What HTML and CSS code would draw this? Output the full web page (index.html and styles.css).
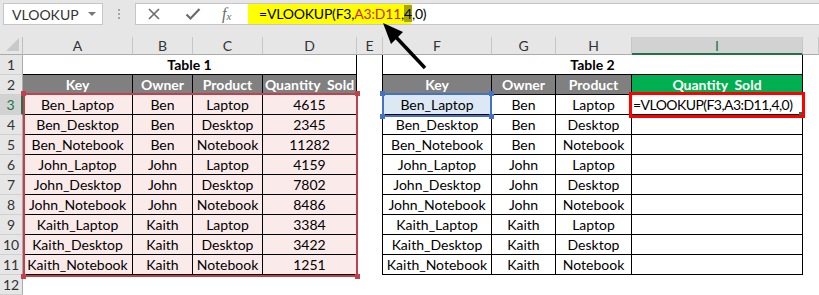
FILE: index.html
```html
<!doctype html>
<html>
    <head>
        <title>VLOOKUP</title>
        <meta charset="utf-8">
        <link rel="stylesheet" href="styles.css">
    </head>

    <body>
        <section class="app">
            <div class="formula-bar">
                <div class="name-box"><span>VLOOKUP</span><span class="caret"></span></div>
                <div class="dots"><i></i><i></i><i></i></div>
                <div class="formula-box">
                    <div class="tools">
                        <svg class="tool" width="14" height="14" viewBox="0 0 14 14"><path d="M2 2 L12 12 M12 2 L2 12" stroke="#6b6b6b" stroke-width="1.6" fill="none"/></svg>
                        <svg class="tool" width="16" height="14" viewBox="0 0 16 14"><path d="M1.5 7.5 L5.5 11.5 L14.5 2" stroke="#6b6b6b" stroke-width="2.2" fill="none"/></svg>
                        <span class="fx">f<sub>x</sub></span>
                    </div>
                    <div class="formula">=VLOOKUP(F3,<span class="ref">A3:D11</span>,<span class="arg">4</span>,0)</div>
                </div>
            </div>

            <div class="sheet">
                <div class="corner"></div>
                <div class="ch">A</div>
                <div class="ch">B</div>
                <div class="ch">C</div>
                <div class="ch">D</div>
                <div class="ch">E</div>
                <div class="ch">F</div>
                <div class="ch">G</div>
                <div class="ch">H</div>
                <div class="ch sel">I</div>
                <div class="ch"></div>

                <div class="rh">1</div>
                <div class="cell t title span4">Table 1</div>
                <div class="cell gap"></div>
                <div class="cell t title span4">Table 2</div>
                <div class="cell"></div>

                <div class="rh">2</div>
                <div class="cell t hd">Key</div>
                <div class="cell t hd">Owner</div>
                <div class="cell t hd">Product</div>
                <div class="cell t hd">Quantity&nbsp; Sold</div>
                <div class="cell gap"></div>
                <div class="cell t hd">Key</div>
                <div class="cell t hd">Owner</div>
                <div class="cell t hd">Product</div>
                <div class="cell t hd green">Quantity&nbsp; Sold</div>
                <div class="cell"></div>

                <div class="rh sel">3</div>
                <div class="cell t pink">Ben_Laptop</div>
                <div class="cell t pink">Ben</div>
                <div class="cell t pink">Laptop</div>
                <div class="cell t pink">4615</div>
                <div class="cell gap"></div>
                <div class="cell t active">Ben_Laptop</div>
                <div class="cell t">Ben</div>
                <div class="cell t">Laptop</div>
                <div class="cell t left">=VLOOKUP(F3,A3:D11,4,0)</div>
                <div class="cell"></div>

                <div class="rh">4</div>
                <div class="cell t pink">Ben_Desktop</div>
                <div class="cell t pink">Ben</div>
                <div class="cell t pink">Desktop</div>
                <div class="cell t pink">2345</div>
                <div class="cell gap"></div>
                <div class="cell t">Ben_Desktop</div>
                <div class="cell t">Ben</div>
                <div class="cell t">Desktop</div>
                <div class="cell t"></div>
                <div class="cell"></div>

                <div class="rh">5</div>
                <div class="cell t pink">Ben_Notebook</div>
                <div class="cell t pink">Ben</div>
                <div class="cell t pink">Notebook</div>
                <div class="cell t pink">11282</div>
                <div class="cell gap"></div>
                <div class="cell t">Ben_Notebook</div>
                <div class="cell t">Ben</div>
                <div class="cell t">Notebook</div>
                <div class="cell t"></div>
                <div class="cell"></div>

                <div class="rh">6</div>
                <div class="cell t pink">John_Laptop</div>
                <div class="cell t pink">John</div>
                <div class="cell t pink">Laptop</div>
                <div class="cell t pink">4159</div>
                <div class="cell gap"></div>
                <div class="cell t">John_Laptop</div>
                <div class="cell t">John</div>
                <div class="cell t">Laptop</div>
                <div class="cell t"></div>
                <div class="cell"></div>

                <div class="rh">7</div>
                <div class="cell t pink">John_Desktop</div>
                <div class="cell t pink">John</div>
                <div class="cell t pink">Desktop</div>
                <div class="cell t pink">7802</div>
                <div class="cell gap"></div>
                <div class="cell t">John_Desktop</div>
                <div class="cell t">John</div>
                <div class="cell t">Desktop</div>
                <div class="cell t"></div>
                <div class="cell"></div>

                <div class="rh">8</div>
                <div class="cell t pink">John_Notebook</div>
                <div class="cell t pink">John</div>
                <div class="cell t pink">Notebook</div>
                <div class="cell t pink">8486</div>
                <div class="cell gap"></div>
                <div class="cell t">John_Notebook</div>
                <div class="cell t">John</div>
                <div class="cell t">Notebook</div>
                <div class="cell t"></div>
                <div class="cell"></div>

                <div class="rh">9</div>
                <div class="cell t pink">Kaith_Laptop</div>
                <div class="cell t pink">Kaith</div>
                <div class="cell t pink">Laptop</div>
                <div class="cell t pink">3384</div>
                <div class="cell gap"></div>
                <div class="cell t">Kaith_Laptop</div>
                <div class="cell t">Kaith</div>
                <div class="cell t">Laptop</div>
                <div class="cell t"></div>
                <div class="cell"></div>

                <div class="rh">10</div>
                <div class="cell t pink">Kaith_Desktop</div>
                <div class="cell t pink">Kaith</div>
                <div class="cell t pink">Desktop</div>
                <div class="cell t pink">3422</div>
                <div class="cell gap"></div>
                <div class="cell t">Kaith_Desktop</div>
                <div class="cell t">Kaith</div>
                <div class="cell t">Desktop</div>
                <div class="cell t"></div>
                <div class="cell"></div>

                <div class="rh">11</div>
                <div class="cell t pink">Kaith_Notebook</div>
                <div class="cell t pink">Kaith</div>
                <div class="cell t pink">Notebook</div>
                <div class="cell t pink">1251</div>
                <div class="cell gap"></div>
                <div class="cell t">Kaith_Notebook</div>
                <div class="cell t">Kaith</div>
                <div class="cell t">Notebook</div>
                <div class="cell t"></div>
                <div class="cell"></div>

                <div class="rh">12</div>
                <div class="cell span10"></div>
            </div>

            <!-- formula reference highlights -->
            <div class="range red-range">
                <i class="handle tl"></i><i class="handle tr"></i><i class="handle bl"></i><i class="handle br"></i>
            </div>
            <div class="range blue-range">
                <i class="handle tl"></i><i class="handle tr"></i><i class="handle bl"></i><i class="handle br"></i>
            </div>
            <div class="range result"><i class="fill-handle"></i></div>

            <svg class="arrow" width="819" height="295">
                <line x1="425" y1="68" x2="394" y2="35" stroke="#000" stroke-width="3.5"/>
                <polygon points="383,23 403,32 391,44" fill="#000"/>
            </svg>
        </section>
    </body>
</html>
```

FILE: styles.css
```css
body{
    margin: 0px;
    padding: 0px;
    background: #fff;
    font-family: Lato, "Open Sans", sans-serif;
}

.app{
    position: relative;
    width: 819px;
    height: 295px;
    overflow: hidden;
}

/* formula bar */

.formula-bar{
    display: flex;
    align-items: flex-start;
    height: 37px;
    padding-top: 3px;
    box-sizing: border-box;
    background: #e6e6e6;
}

.name-box{
    display: flex;
    align-items: center;
    justify-content: space-between;
    width: 100px;
    height: 22px;
    margin-left: 3px;
    padding: 0px 6px 0px 8px;
    box-sizing: border-box;
    border: 1px solid #c6c6c6;
    background: #fff;
    font-size: 14px;
    color: #333;
}

.caret{
    border-left: 4px solid transparent;
    border-right: 4px solid transparent;
    border-top: 4px solid #777;
}

.dots{
    display: flex;
    flex-direction: column;
    align-items: center;
    justify-content: center;
    gap: 2px;
    width: 32px;
    height: 22px;
}

.dots i{
    width: 2px;
    height: 2px;
    background: #a6a6a6;
}

.formula-box{
    display: flex;
    flex: 1;
    height: 22px;
    box-sizing: border-box;
    border: 1px solid #c6c6c6;
    border-right: none;
    background: #fff;
}

.tools{
    display: flex;
    align-items: center;
    width: 112px;
    padding-left: 11px;
    box-sizing: border-box;
}

.tool:nth-child(2){
    margin-left: 24px;
}

.fx{
    margin-left: 21px;
    font-family: "Liberation Serif", serif;
    font-style: italic;
    font-size: 16px;
    color: #6b6b6b;
}

.fx sub{
    font-size: 11px;
    vertical-align: -1px;
}

.formula{
    width: 163px;
    padding-left: 11px;
    box-sizing: border-box;
    background: #ffff00;
    font-size: 14px;
    line-height: 20px;
    letter-spacing: -0.2px;
    white-space: nowrap;
    color: #000;
}

.formula .ref{
    color: #d21f1f;
}

.formula .arg{
    background: #a6a600;
}

/* grid */

.sheet{
    display: grid;
    grid-template-columns: 23px 110px 60px 70px 94px 26px 109px 64px 76px 171px 16px;
    grid-template-rows: 18px repeat(12, 20px);
    font-size: 14px;
    color: #000;
}

.sheet > div{
    display: flex;
    align-items: center;
    justify-content: center;
    box-sizing: border-box;
    white-space: nowrap;
}

.corner{
    position: relative;
    background: #e6e6e6;
    border-right: 1px solid #bdbdbd;
    border-bottom: 1px solid #ababab;
}

.corner::after{
    content: "";
    position: absolute;
    right: 3px;
    bottom: 3px;
    border-left: 13px solid transparent;
    border-bottom: 13px solid #c9c9c9;
}

.ch{
    background: #e6e6e6;
    border-right: 1px solid #c6c6c6;
    border-bottom: 1px solid #ababab;
    font-size: 14px;
    color: #333;
}

.ch.sel{
    background: #d2d2d2;
    border-bottom: 2px solid #217346;
    color: #217346;
}

.rh{
    background: #e6e6e6;
    border-right: 1px solid #ababab;
    border-bottom: 1px solid #d0d0d0;
    font-size: 14px;
    color: #333;
}

.rh.sel{
    background: #d2d2d2;
    border-right: 2px solid #217346;
    color: #217346;
}

.t{
    border-right: 1px solid #000;
    border-bottom: 1px solid #000;
}

.gap{
    border-right: 1px solid #000;
}

.span4{
    grid-column: span 4;
}

.span10{
    grid-column: span 10;
}

.title{
    font-weight: bold;
}

.hd{
    background: #808080;
    color: #fff;
    font-weight: bold;
}

.hd.green{
    background: #00b050;
}

.pink{
    background: #fbeaea;
}

.active{
    background: #dde8f5;
}

.sheet > .left{
    justify-content: flex-start;
    padding-left: 1px;
    letter-spacing: -0.55px;
}

/* overlays */

.range{
    position: absolute;
    box-sizing: border-box;
}

.red-range{
    left: 23px;
    top: 93px;
    width: 335px;
    height: 184px;
    border: 2px solid #c0414b;
}

.blue-range{
    left: 382px;
    top: 93px;
    width: 110px;
    height: 24px;
    border: 2px solid #4472c4;
}

.result{
    left: 629px;
    top: 92px;
    width: 176px;
    height: 26px;
    border: 3px solid #ff0000;
}

.handle{
    position: absolute;
    width: 5px;
    height: 5px;
}

.red-range .handle{
    background: #c0414b;
}

.blue-range .handle{
    background: #4472c4;
}

.tl{ left: -4px; top: -4px; }
.tr{ right: -4px; top: -4px; }
.bl{ left: -4px; bottom: -4px; }
.br{ right: -4px; bottom: -4px; }

.fill-handle{
    position: absolute;
    right: 0px;
    bottom: 0px;
    width: 3px;
    height: 3px;
    background: #217346;
}

.arrow{
    position: absolute;
    left: 0px;
    top: 0px;
    pointer-events: none;
}
```
